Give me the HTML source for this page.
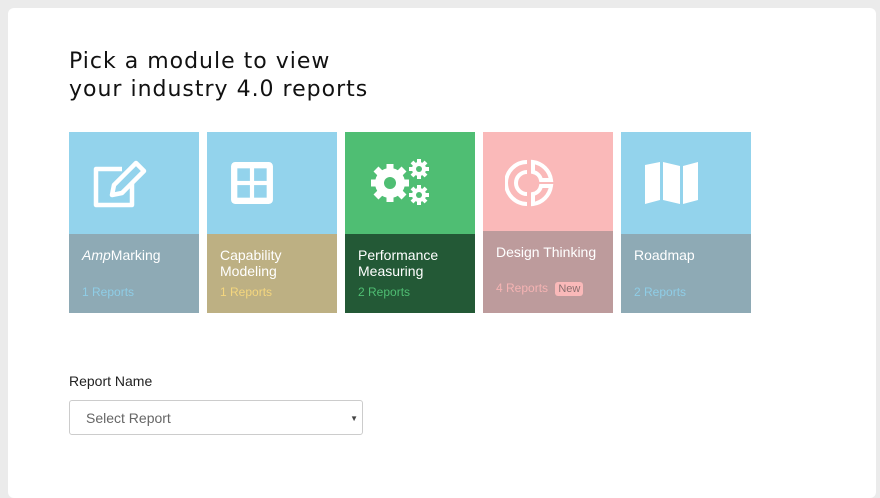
<!DOCTYPE html>
<html><head><style>
body{margin:0;width:880px;height:485px;background:#ebebeb;font-family:"Liberation Sans",sans-serif;overflow:hidden}
.wrap{position:absolute;left:8px;top:8px;width:868px;height:490px;background:#fff;border-radius:6px}
h1{position:absolute;left:61px;top:40px;margin:0;font-family:"DejaVu Sans",sans-serif;font-weight:normal;font-size:22px;line-height:28px;color:#111;letter-spacing:1px}
.card{position:absolute;top:124px;width:130px;height:181px}
.top{height:102px;position:relative}
.bot{position:absolute;left:0;right:0;bottom:0;top:102px;padding:13px 13px;box-sizing:border-box;font-size:14px;color:#fff;line-height:16px}
.rep{position:absolute;left:13px;bottom:13px;font-size:12px}
svg{position:absolute}
.lbl{position:absolute;left:61px;top:365px;font-size:14px;color:#222}
.sel{position:absolute;left:61px;top:392px;width:294px;height:35px;border:1px solid #ccc;border-radius:3px;font-size:14px;color:#666;line-height:35px;padding-left:16px;box-sizing:border-box}
.sel span{position:absolute;right:4px;top:0;font-size:8px;color:#444}
</style></head><body>
<div class="wrap">
<h1>Pick a module to view<br>your industry 4.0 reports</h1>

<div class="card" style="left:61px"><div class="top" style="background:#93d3ec">
<svg style="left:23px;top:27px" width="58" height="52" viewBox="0 0 58 52" fill="none" stroke="#fff" stroke-width="4.5" stroke-linejoin="round"><path d="M30 10H4v36h36V24"/><path d="M44 4l8 8-22 22-10 2 2-10z"/></svg>
</div><div class="bot" style="background:#8eaab5"><i>Amp</i>Marking<div class="rep" style="color:#8fcde6">1 Reports</div></div></div>

<div class="card" style="left:199px"><div class="top" style="background:#93d3ec">
<svg style="left:23px;top:29px" width="44" height="44" viewBox="0 0 42 42"><rect x="1" y="1" width="40" height="40" rx="4" fill="#fff"/><rect x="7" y="7" width="12" height="12" fill="#93d3ec"/><rect x="23" y="7" width="12" height="12" fill="#93d3ec"/><rect x="7" y="23" width="12" height="12" fill="#93d3ec"/><rect x="23" y="23" width="12" height="12" fill="#93d3ec"/></svg>
</div><div class="bot" style="background:#bdb083">Capability<br>Modeling<div class="rep" style="color:#f4d67e">1 Reports</div></div></div>

<div class="card" style="left:337px"><div class="top" style="background:#4fbe73">
<svg style="left:23px;top:25px" width="64" height="54" viewBox="0 0 64 54"><g fill="#fff"><circle cx="22" cy="26" r="15"/><g stroke="#fff" stroke-width="7"><path d="M22 7v38M3 26h38M8 12l28 28M36 12L8 40"/></g><circle cx="51" cy="12" r="7"/><circle cx="51" cy="38" r="7"/><g stroke="#fff" stroke-width="4"><path d="M51 2v20M41 12h20M44 5l14 14M58 5L44 19M51 28v20M41 38h20M44 31l14 14M58 31L44 45"/></g></g><circle cx="22" cy="26" r="6" fill="#4fbe73"/><circle cx="51" cy="12" r="3" fill="#4fbe73"/><circle cx="51" cy="38" r="3" fill="#4fbe73"/></svg>
</div><div class="bot" style="background:#235936">Performance<br>Measuring<div class="rep" style="color:#4fbe73">2 Reports</div></div></div>

<div class="card" style="left:475px"><div class="top" style="background:#fab9b9;height:99px">
<svg style="left:22px;top:26px" width="50" height="50" viewBox="0 0 50 50" fill="none" stroke="#fff" stroke-width="4"><path d="M22 4A21 21 0 0 0 22 46"/><path d="M22 14A11 11 0 0 0 22 36"/><path d="M28 4A21 21 0 0 1 46 22H36A10 10 0 0 0 28 14Z"/><path d="M46 28A21 21 0 0 1 28 46V36A10 10 0 0 0 36 28Z"/></svg>
</div><div class="bot" style="background:#bd9b9c;top:99px">Design Thinking<div class="rep" style="color:#f5b3b3;bottom:16px">4 Reports <span style="background:#fab9b9;color:#8a7070;font-size:11px;padding:1px 3px;border-radius:3px;margin-left:4px">New</span></div></div></div>

<div class="card" style="left:613px"><div class="top" style="background:#93d3ec">
<svg style="left:23px;top:29px" width="56" height="44" viewBox="0 0 56 44" fill="#fff"><path d="M1 4l15-3v38L1 43z"/><path d="M19 1l17 4v38l-17-4z"/><path d="M39 5l15-4v38l-15 4z"/></svg>
</div><div class="bot" style="background:#8eaab5">Roadmap<div class="rep" style="color:#8fcde6">2 Reports</div></div></div>

<div class="lbl">Report Name</div>
<div class="sel">Select Report<span>▼</span></div>
</div>
</body></html>
